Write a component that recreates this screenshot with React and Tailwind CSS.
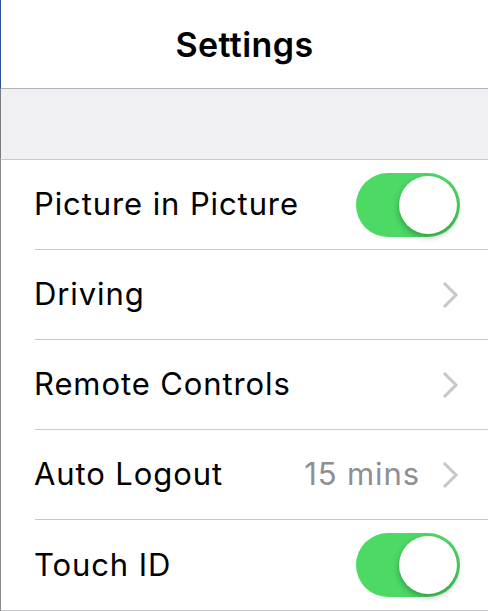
import React from 'react';

const rows = [
  { label: 'Picture in Picture', toggle: true },
  { label: 'Driving', chevron: true },
  { label: 'Remote Controls', chevron: true },
  { label: 'Auto Logout', value: '15 mins', chevron: true },
  { label: 'Touch ID', toggle: true },
];

const Toggle = () => (
  <div className="w-[104px] h-[64px] rounded-full bg-[#4cd964] flex items-center justify-end pr-[3px]">
    <div className="w-[58px] h-[58px] rounded-full bg-white shadow-[0_3px_6px_rgba(0,0,0,0.3)]" />
  </div>
);

const Chevron = () => (
  <svg width="18" height="26" viewBox="0 0 18 26" className="ml-[22px]">
    <path d="M3 2 L14 13 L3 24" fill="none" stroke="#c7c7cc" strokeWidth="3" strokeLinecap="square" />
  </svg>
);

const App = () => {
  return (
    <div className="w-[488px] h-[611px] bg-white overflow-hidden font-['Inter',sans-serif]">
      <div className="h-[89px] border-l border-l-[#2a5696] border-b border-b-[#b2b2b2] flex items-center justify-center">
        <h1 className="text-[34px] font-semibold text-black tracking-[0.4px]">Settings</h1>
      </div>
      <div className="h-[71px] bg-[#efeff4] border-l border-l-[#7a7a7a] border-b border-b-[#c8c7cc]" />
      <div className="border-l border-l-[#8a8a8a]">
        {rows.map((row, i) => (
          <div key={row.label} className="pl-[34px]">
            <div
              className={`h-[90px] flex items-center pr-[28px] ${
                i < rows.length - 1 ? 'border-b border-b-[#c8c7cc]' : ''
              }`}
            >
              <span className="flex-1 -ml-[1px] text-[31px] text-black tracking-[0.9px]">{row.label}</span>
              {row.value && <span className="text-[31px] text-[#8e8e93] tracking-[0.9px]">{row.value}</span>}
              {row.chevron && <Chevron />}
              {row.toggle && <Toggle />}
            </div>
          </div>
        ))}
        <div className="border-b border-b-[#c8c7cc]" />
      </div>
    </div>
  );
};

export default App;
